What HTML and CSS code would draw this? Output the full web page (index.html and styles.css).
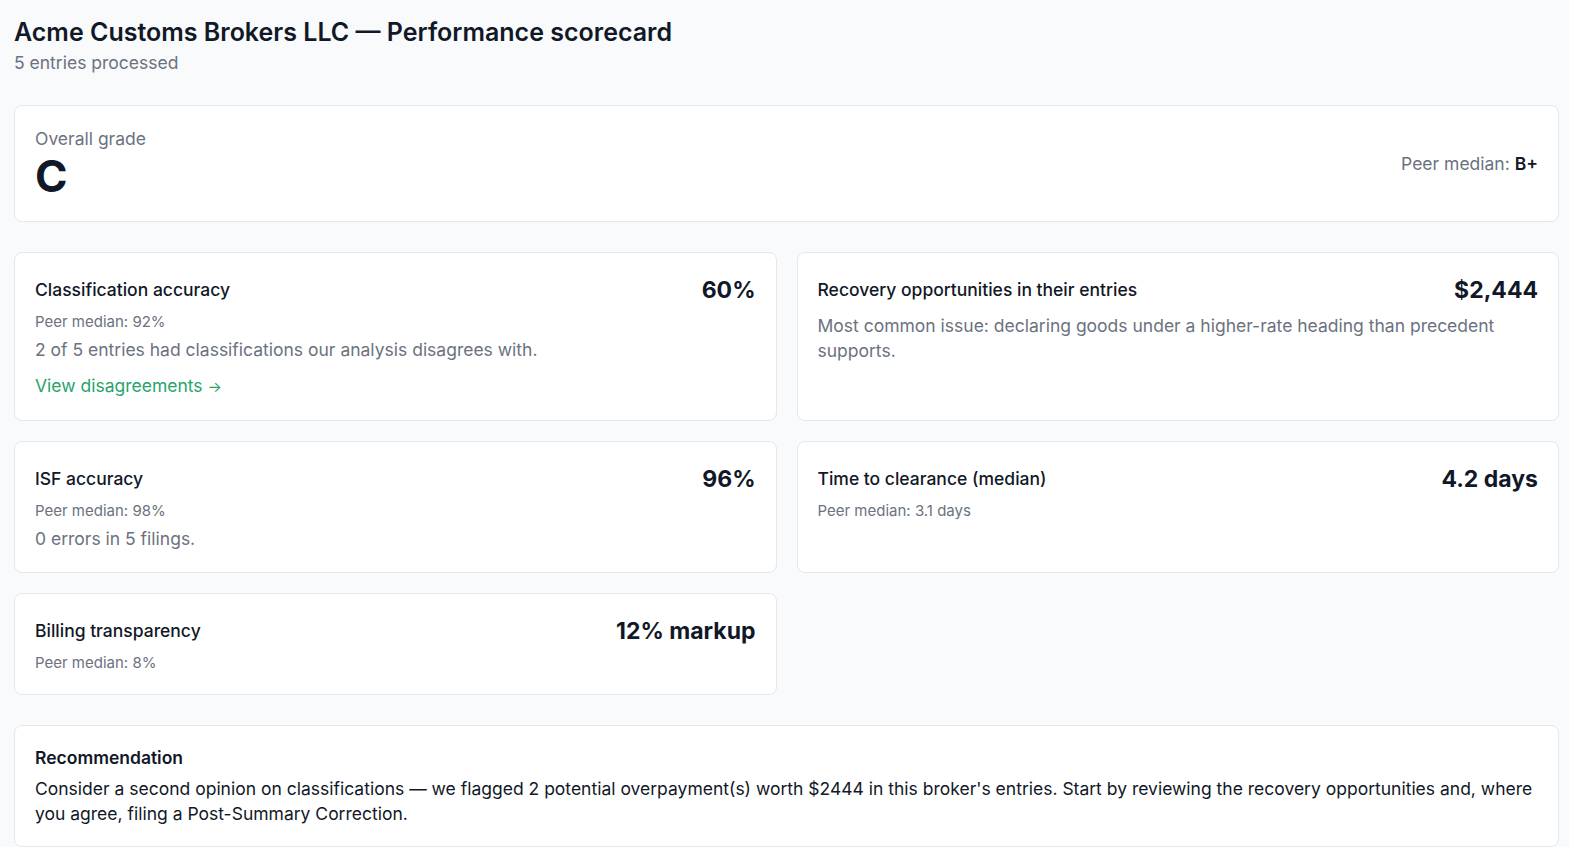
FILE: index.html
```html
<!DOCTYPE html>
<html lang="en">

<head>
    <meta charset="UTF-8">
    <meta name="viewport" content="width=device-width, initial-scale=1.0">
    <title>Broker Scorecard</title>
    <link rel="stylesheet" href="styles.css">
</head>

<body>

    <div class="scorecard">
        <div class="scorecard_header">
            <h1>Acme Customs Brokers LLC — Performance scorecard</h1>
            <div class="subtitle">5 entries processed</div>
        </div>

        <div class="card grade_card">
            <div>
                <div class="grade_label">Overall grade</div>
                <div class="grade">C</div>
            </div>
            <div class="grade_peer">Peer median: <strong>B+</strong></div>
        </div>

        <div class="metrics">
            <div class="card metric">
                <div class="metric_head">
                    <span class="metric_title">Classification accuracy</span>
                    <span class="metric_value">60%</span>
                </div>
                <div class="metric_peer">Peer median: 92%</div>
                <p class="metric_desc">2 of 5 entries had classifications our analysis disagrees with.</p>
                <a class="metric_link" href="#">View disagreements <span class="arrow">→</span></a>
            </div>

            <div class="card metric">
                <div class="metric_head">
                    <span class="metric_title">Recovery opportunities in their entries</span>
                    <span class="metric_value">$2,444</span>
                </div>
                <p class="metric_desc metric_desc_lead">Most common issue: declaring goods under a higher-rate heading than precedent supports.</p>
            </div>

            <div class="card metric">
                <div class="metric_head">
                    <span class="metric_title">ISF accuracy</span>
                    <span class="metric_value">96%</span>
                </div>
                <div class="metric_peer">Peer median: 98%</div>
                <p class="metric_desc">0 errors in 5 filings.</p>
            </div>

            <div class="card metric">
                <div class="metric_head">
                    <span class="metric_title">Time to clearance (median)</span>
                    <span class="metric_value">4.2 days</span>
                </div>
                <div class="metric_peer">Peer median: 3.1 days</div>
            </div>

            <div class="card metric">
                <div class="metric_head">
                    <span class="metric_title">Billing transparency</span>
                    <span class="metric_value">12% markup</span>
                </div>
                <div class="metric_peer">Peer median: 8%</div>
            </div>
        </div>

        <div class="card recommendation">
            <div class="recommendation_title">Recommendation</div>
            <p class="recommendation_text">Consider a second opinion on classifications — we flagged 2 potential overpayment(s) worth $2444 in this broker's entries. Start by reviewing the recovery opportunities and, where you agree, filing a Post-Summary Correction.</p>
        </div>
    </div>

</body>

</html>
```

FILE: styles.css
```css
body {
    margin: 0;
    background: #f9fafb;
    color: #111827;
    font-family: Inter, "Noto Sans", sans-serif;
}

.scorecard {
    padding: 17px 10px 16px 14px;
}

.scorecard_header {
    margin-bottom: 30px;
}

h1 {
    margin: 0;
    font-size: 25px;
    line-height: 30px;
    font-weight: 600;
}

.subtitle {
    margin-top: 4px;
    font-size: 17.5px;
    line-height: 24px;
    color: #6b7280;
}

.card {
    background: #fff;
    border: 1px solid #e5e7eb;
    border-radius: 8px;
    padding: 20px;
}

.grade_card {
    display: flex;
    justify-content: space-between;
    align-items: center;
    margin-bottom: 30px;
}

.grade_label {
    font-size: 17.5px;
    line-height: 25px;
    color: #6b7280;
}

.grade {
    font-size: 44px;
    line-height: 50px;
    font-weight: 700;
}

.grade_peer {
    font-size: 17.5px;
    color: #6b7280;
}

.grade_peer strong {
    color: #111827;
    font-weight: 600;
}

.metrics {
    display: grid;
    grid-template-columns: 1fr 1fr;
    gap: 20px;
    margin-bottom: 30px;
}

.metric {
    padding-bottom: 21px;
}

.metric_head {
    display: flex;
    justify-content: space-between;
    align-items: center;
    margin-top: 2px;
    line-height: 30px;
}

.metric_title {
    font-size: 17.5px;
    font-weight: 500;
}

.metric_value {
    font-size: 23px;
    font-weight: 700;
}

.metric_peer {
    margin-top: 7px;
    font-size: 15px;
    line-height: 20px;
    color: #6b7280;
}

.metric_desc {
    margin: 6px 0 0;
    font-size: 17.5px;
    line-height: 24px;
    color: #6b7280;
}

.metric_desc_lead {
    margin-top: 8px;
    line-height: 25px;
}

.metric_link {
    display: block;
    margin-top: 11px;
    padding-bottom: 1px;
    font-size: 17.5px;
    line-height: 25px;
    color: #27a46c;
    text-decoration: none;
}

.arrow {
    font-size: 15px;
    line-height: 1;
}

.recommendation_title {
    font-size: 17.5px;
    line-height: 24px;
    font-weight: 600;
}

.recommendation_text {
    margin: 6px 0 0;
    font-size: 17.5px;
    line-height: 25px;
}
```
